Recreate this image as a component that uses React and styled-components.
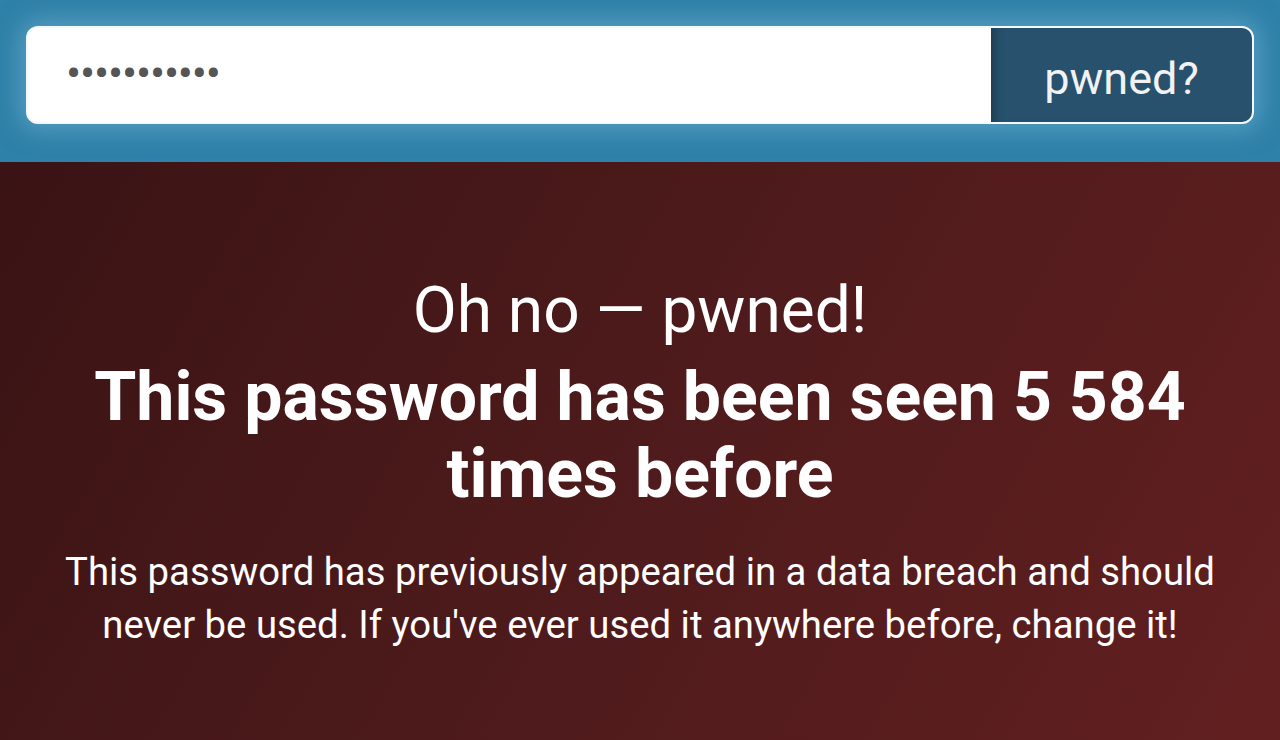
import React from "react";
import styled, { createGlobalStyle } from "styled-components";

const GlobalStyle = createGlobalStyle`
  html, body {
    margin: 0;
    padding: 0;
    height: 100%;
  }
  body {
    font-family: Roboto, "Liberation Sans", sans-serif;
    background: #3c1415;
  }
  #root {
    min-height: 100vh;
    display: flex;
    flex-direction: column;
  }
`;

const App = () => {
  return (
    <>
      <GlobalStyle />
      <Header>
        <SearchForm onSubmit={(e) => e.preventDefault()}>
          <PasswordInput type="password" value="12345678901" readOnly />
          <SubmitButton type="submit">pwned?</SubmitButton>
        </SearchForm>
      </Header>
      <Result>
        <Content>
          <Exclaim>Oh no — pwned!</Exclaim>
          <Headline>This password has been seen 5 584 times before</Headline>
          <Message>
            This password has previously appeared in a data breach and should
            never be used. If you've ever used it anywhere before, change it!
          </Message>
        </Content>
      </Result>
    </>
  );
};

export default App;

const Header = styled.header`
  background: #2e81a8;
  padding: 26px 26px 38px;
`;

const SearchForm = styled.form`
  display: flex;
  height: 98px;
  box-sizing: border-box;
  border: 2px solid #f4f8fa;
  border-radius: 12px;
  overflow: hidden;
  background: #fff;
  box-shadow: 0 0 24px 6px rgba(120, 180, 215, 0.55);
`;

const PasswordInput = styled.input`
  flex: 1;
  border: none;
  outline: none;
  background: #fff;
  padding: 0 0 4px 38px;
  font-family: Roboto, sans-serif;
  font-size: 45px;
  letter-spacing: -1.2px;
  color: #555;
`;

const SubmitButton = styled.button`
  width: 261px;
  border: none;
  background: #27516d;
  box-shadow: inset 10px 0 10px -6px rgba(0, 0, 0, 0.25);
  color: #f2f2f2;
  font-family: Roboto, sans-serif;
  font-size: 45px;
  font-weight: 400;
  cursor: pointer;
  padding: 6px 0 0;
`;

const Result = styled.main`
  flex: 1;
  background: linear-gradient(120deg, #3a1314 0%, #4c1a1b 45%, #621f20 100%);
  display: flex;
  justify-content: center;
`;

const Content = styled.div`
  width: 1160px;
  padding-top: 112px;
  text-align: center;
  color: #fff;
`;

const Exclaim = styled.div`
  font-size: 64px;
  font-weight: 400;
  line-height: 74px;
`;

const Headline = styled.h2`
  margin: 11px 0 0;
  font-size: 68px;
  font-weight: 700;
  line-height: 77px;
`;

const Message = styled.p`
  margin: 32px 0 0;
  font-size: 38.3px;
  line-height: 53px;
`;
